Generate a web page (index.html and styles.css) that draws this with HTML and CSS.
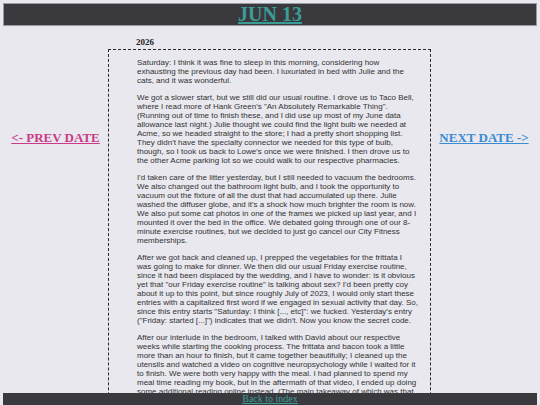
FILE: index.html
```html
<!DOCTYPE html>
<html>
<head>
<meta charset="utf-8">
<link rel="stylesheet" href="styles.css">
</head>
<body>
<header class="topbar">
  <h1 class="title"><a href="#">JUN 13</a></h1>
</header>
<div class="layout">
  <nav class="side side-left">
    <a class="prev" href="#">&lt;- PREV DATE</a>
  </nav>
  <main class="center">
    <h3 class="year">2026</h3>
    <article class="entry">
      <p>Saturday: I think it was fine to sleep in this morning, considering how exhausting the previous day had been. I luxuriated in bed with Julie and the cats, and it was wonderful.</p>
      <p>We got a slower start, but we still did our usual routine. I drove us to Taco Bell, where I read more of Hank Green's "An Absolutely Remarkable Thing". (Running out of time to finish these, and I did use up most of my June data allowance last night.) Julie thought we could find the light bulb we needed at Acme, so we headed straight to the store; I had a pretty short shopping list. They didn't have the specialty connector we needed for this type of bulb, though, so I took us back to Lowe's once we were finished. I then drove us to the other Acme parking lot so we could walk to our respective pharmacies.</p>
      <p>I'd taken care of the litter yesterday, but I still needed to vacuum the bedrooms. We also changed out the bathroom light bulb, and I took the opportunity to vacuum out the fixture of all the dust that had accumulated up there. Julie washed the diffuser globe, and it's a shock how much brighter the room is now. We also put some cat photos in one of the frames we picked up last year, and I mounted it over the bed in the office. We debated going through one of our 8-minute exercise routines, but we decided to just go cancel our City Fitness memberships.</p>
      <p>After we got back and cleaned up, I prepped the vegetables for the frittata I was going to make for dinner. We then did our usual Friday exercise routine, since it had been displaced by the wedding, and I have to wonder: is it obvious yet that "our Friday exercise routine" is talking about sex? I'd been pretty coy about it up to this point, but since roughly July of 2023, I would only start these entries with a capitalized first word if we engaged in sexual activity that day. So, since this entry starts "Saturday: I think [..., etc]": we fucked. Yesterday's entry ("Friday: started [...]") indicates that we didn't. Now you know the secret code.</p>
      <p>After our interlude in the bedroom, I talked with David about our respective weeks while starting the cooking process. The frittata and bacon took a little more than an hour to finish, but it came together beautifully; I cleaned up the utensils and watched a video on cognitive neuropsychology while I waited for it to finish. We were both very happy with the meal. I had planned to spend my meal time reading my book, but in the aftermath of that video, I ended up doing some additional reading online instead. (The main takeaway of which was that the brain is a lot stranger than I had assumed.)</p>
      <p>In the evening we watched a couple of episodes of our show and went to bed early.</p>
    </article>
  </main>
  <nav class="side side-right">
    <a class="next" href="#">NEXT DATE -&gt;</a>
  </nav>
</div>
<footer class="bottombar">
  <a class="back" href="#">Back to index</a>
</footer>
</body>
</html>
```
FILE: styles.css
```css
html, body {
  margin: 0;
  padding: 0;
  background: #e8e8ee;
}
body {
  font-family: "Liberation Serif", "Times New Roman", serif;
  padding: 3px 3px 0;
}
.topbar {
  background: #3a3a3e;
  border: 1px solid #9a9aa2;
  height: 21px;
  display: flex;
  align-items: center;
  justify-content: center;
}
.title {
  margin: 0;
  font-size: 20px;
  line-height: 21px;
  font-weight: bold;
}
.title a {
  color: #3a9e96;
}
.layout {
  display: grid;
  grid-template-columns: 105px 323px 1fr;
}
.side {
  display: flex;
  justify-content: center;
  padding-top: 104px;
}
.side a {
  font-weight: bold;
  font-size: 13px;
  line-height: 16px;
  height: 16px;
}
.prev { color: #c93b88; }
.next { color: #3a8bd2; }
.year {
  margin: 0;
  padding: 11px 0 0 28px;
  font-size: 9px;
  line-height: 10px;
  font-weight: bold;
  color: #222;
  height: 10px;
}
.entry {
  margin-top: 2px;
  border: 1px dashed #2a2a2a;
  padding: 0 11.8px 20px 28px;
  font-family: "Liberation Sans", Arial, sans-serif;
  font-size: 8px;
  line-height: normal;
  color: #333;
}
.entry p {
  margin: 8px 0;
}
.bottombar {
  position: fixed;
  left: 3px;
  right: 3px;
  bottom: 0;
  height: 12px;
  background: #3a3a3e;
  text-align: center;
  font-size: 10px;
  line-height: 12px;
}
.back {
  color: #3a9e96;
}
```
